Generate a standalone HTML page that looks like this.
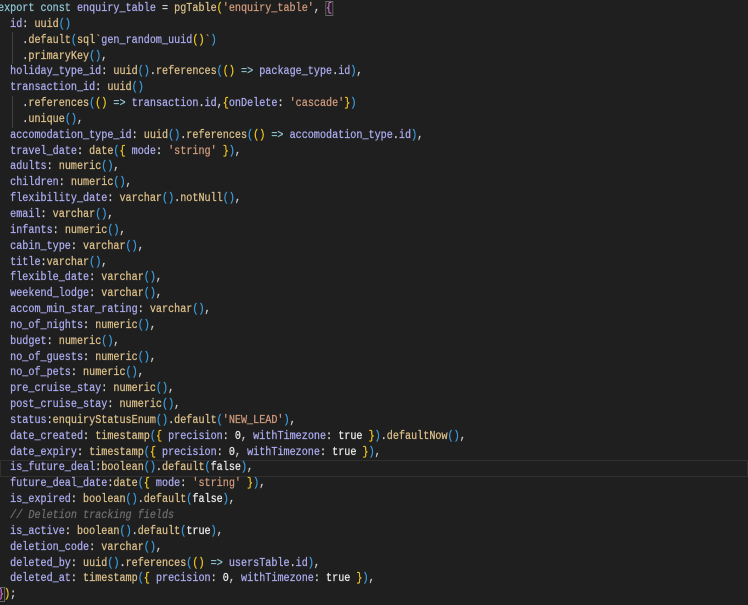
<!DOCTYPE html>
<html><head><meta charset="utf-8"><style>
html,body{margin:0;padding:0;background:#1f1f1f;width:748px;height:605px;overflow:hidden}
pre{margin:0;position:absolute;left:-2px;top:1px;font-family:"Liberation Mono",monospace;font-size:11.5px;line-height:15.85px;color:#d4d4d4;white-space:pre;transform:scaleX(0.88);transform-origin:0 0;-webkit-text-stroke:0.25px currentColor}
.k{color:#8fc5d6}.p{color:#acacf0}.f{color:#dcc08a}.s{color:#d09a7c}.b{color:#3b9ee0}.y{color:#f0c820}.m{color:#d070d0}.w{color:#ececec}.c{color:#6e6e6e;font-style:italic}
.cur{position:absolute;left:0;width:746px;top:460px;height:15px;border:1px solid #303030}
.g{position:absolute;left:12px;width:1px;background:#404040}
</style></head><body>
<div class="cur"></div>
<div class="g" style="top:32px;height:32px"></div>
<div class="g" style="top:96px;height:32px"></div>
<pre><span class="k">export const</span> <span class="p">enquiry_table</span> = <span class="f">pgTable</span><span class="y">(</span><span class="s">'enquiry_table'</span>, <span class="m" style="outline:1px solid #666">{</span>
  <span class="p">id</span>: <span class="f">uuid</span><span class="b">()</span>
    .<span class="f">default</span><span class="b">(</span><span class="f">sql</span><span class="s">`</span><span class="p">gen_random_uuid</span><span class="y">()</span><span class="s">`</span><span class="b">)</span>
    .<span class="f">primaryKey</span><span class="b">()</span>,
  <span class="p">holiday_type_id</span>: <span class="f">uuid</span><span class="b">()</span>.<span class="f">references</span><span class="b">(</span><span class="y">()</span> <span class="k">=&gt;</span> <span class="p">package_type</span>.<span class="p">id</span><span class="b">)</span>,
  <span class="p">transaction_id</span>: <span class="f">uuid</span><span class="b">()</span>
    .<span class="f">references</span><span class="b">(</span><span class="y">()</span> <span class="k">=&gt;</span> <span class="p">transaction</span>.<span class="p">id</span>,<span class="y">{</span><span class="p">onDelete</span>: <span class="s">'cascade'</span><span class="y">}</span><span class="b">)</span>
    .<span class="f">unique</span><span class="b">()</span>,
  <span class="p">accomodation_type_id</span>: <span class="f">uuid</span><span class="b">()</span>.<span class="f">references</span><span class="b">(</span><span class="y">()</span> <span class="k">=&gt;</span> <span class="p">accomodation_type</span>.<span class="p">id</span><span class="b">)</span>,
  <span class="p">travel_date</span>: <span class="f">date</span><span class="b">(</span><span class="y">{</span> <span class="p">mode</span>: <span class="s">'string'</span> <span class="y">}</span><span class="b">)</span>,
  <span class="p">adults</span>: <span class="f">numeric</span><span class="b">()</span>,
  <span class="p">children</span>: <span class="f">numeric</span><span class="b">()</span>,
  <span class="p">flexibility_date</span>: <span class="f">varchar</span><span class="b">()</span>.<span class="f">notNull</span><span class="b">()</span>,
  <span class="p">email</span>: <span class="f">varchar</span><span class="b">()</span>,
  <span class="p">infants</span>: <span class="f">numeric</span><span class="b">()</span>,
  <span class="p">cabin_type</span>: <span class="f">varchar</span><span class="b">()</span>,
  <span class="p">title</span>:<span class="f">varchar</span><span class="b">()</span>,
  <span class="p">flexible_date</span>: <span class="f">varchar</span><span class="b">()</span>,
  <span class="p">weekend_lodge</span>: <span class="f">varchar</span><span class="b">()</span>,
  <span class="p">accom_min_star_rating</span>: <span class="f">varchar</span><span class="b">()</span>,
  <span class="p">no_of_nights</span>: <span class="f">numeric</span><span class="b">()</span>,
  <span class="p">budget</span>: <span class="f">numeric</span><span class="b">()</span>,
  <span class="p">no_of_guests</span>: <span class="f">numeric</span><span class="b">()</span>,
  <span class="p">no_of_pets</span>: <span class="f">numeric</span><span class="b">()</span>,
  <span class="p">pre_cruise_stay</span>: <span class="f">numeric</span><span class="b">()</span>,
  <span class="p">post_cruise_stay</span>: <span class="f">numeric</span><span class="b">()</span>,
  <span class="p">status</span>:<span class="f">enquiryStatusEnum</span><span class="b">()</span>.<span class="f">default</span><span class="b">(</span><span class="s">'NEW_LEAD'</span><span class="b">)</span>,
  <span class="p">date_created</span>: <span class="f">timestamp</span><span class="b">(</span><span class="y">{</span> <span class="p">precision</span>: <span class="w">0</span>, <span class="p">withTimezone</span>: <span class="w">true</span> <span class="y">}</span><span class="b">)</span>.<span class="f">defaultNow</span><span class="b">()</span>,
  <span class="p">date_expiry</span>: <span class="f">timestamp</span><span class="b">(</span><span class="y">{</span> <span class="p">precision</span>: <span class="w">0</span>, <span class="p">withTimezone</span>: <span class="w">true</span> <span class="y">}</span><span class="b">)</span>,
  <span class="p">is_future_deal</span>:<span class="f">boolean</span><span class="b">()</span>.<span class="f">default</span><span class="b">(</span><span class="w">false</span><span class="b">)</span>,
  <span class="p">future_deal_date</span>:<span class="f">date</span><span class="b">(</span><span class="y">{</span> <span class="p">mode</span>: <span class="s">'string'</span> <span class="y">}</span><span class="b">)</span>,
  <span class="p">is_expired</span>: <span class="f">boolean</span><span class="b">()</span>.<span class="f">default</span><span class="b">(</span><span class="w">false</span><span class="b">)</span>,
  <span class="c">// Deletion tracking fields</span>
  <span class="p">is_active</span>: <span class="f">boolean</span><span class="b">()</span>.<span class="f">default</span><span class="b">(</span><span class="w">true</span><span class="b">)</span>,
  <span class="p">deletion_code</span>: <span class="f">varchar</span><span class="b">()</span>,
  <span class="p">deleted_by</span>: <span class="f">uuid</span><span class="b">()</span>.<span class="f">references</span><span class="b">(</span><span class="y">()</span> <span class="k">=&gt;</span> <span class="p">usersTable</span>.<span class="p">id</span><span class="b">)</span>,
  <span class="p">deleted_at</span>: <span class="f">timestamp</span><span class="b">(</span><span class="y">{</span> <span class="p">precision</span>: <span class="w">0</span>, <span class="p">withTimezone</span>: <span class="w">true</span> <span class="y">}</span><span class="b">)</span>,
<span class="m" style="outline:1px solid #666">}</span><span class="y">)</span>;</pre>
</body></html>
